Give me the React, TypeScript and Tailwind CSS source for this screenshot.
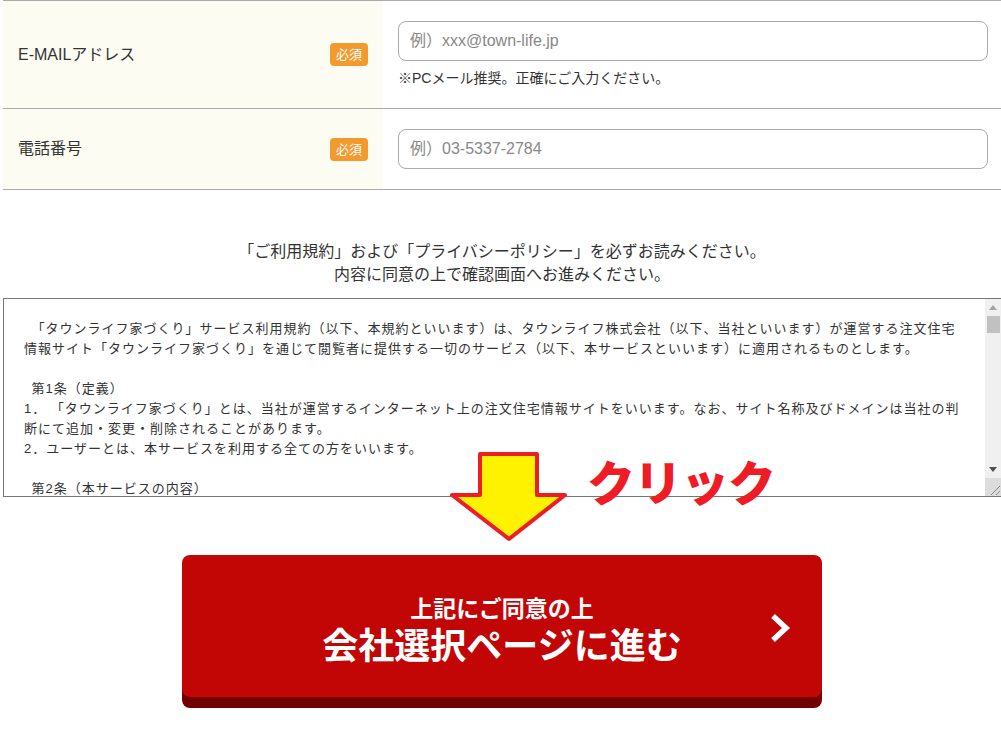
import React from 'react';

const termsLines = [
  '　「タウンライフ家づくり」サービス利用規約（以下、本規約といいます）は、タウンライフ株式会社（以下、当社といいます）が運営する注文住宅',
  '情報サイト「タウンライフ家づくり」を通じて閲覧者に提供する一切のサービス（以下、本サービスといいます）に適用されるものとします。',
  '',
  '\u2002第1条（定義）',
  '1． 「タウンライフ家づくり」とは、当社が運営するインターネット上の注文住宅情報サイトをいいます。なお、サイト名称及びドメインは当社の判',
  '断にて追加・変更・削除されることがあります。',
  '2．ユーザーとは、本サービスを利用する全ての方をいいます。',
  '',
  '\u2002第2条（本サービスの内容）',
];

function Badge() {
  return (
    <span className="inline-flex items-center justify-center w-[38px] h-[23px] rounded-[4px] bg-[#f39a2f] text-white text-[13px] leading-none">
      必須
    </span>
  );
}

function FormRow({
  label,
  placeholder,
  note,
}: {
  label: string;
  placeholder: string;
  note?: string;
}) {
  return (
    <div className="flex border-b border-[#aaaaaa]">
      <div className="w-[380px] shrink-0 bg-[#fcfcf2] pl-[15px] pr-[15px] flex items-center justify-between">
        <span className="text-[16px] text-[#333333]">{label}</span>
        <Badge />
      </div>
      <div className="flex-1 pl-[15px] pr-[13px] pt-[20px] pb-[20px]">
        <div className="h-[40px] rounded-[8px] border border-[#aaaaaa] px-[11px] flex items-center text-[16px] text-[#888888]">
          {placeholder}
        </div>
        {note && <p className="mt-[7px] text-[14px] leading-[20px] text-[#333333]">{note}</p>}
      </div>
    </div>
  );
}

export default function App() {
  return (
    <div
      className="w-[1001px] h-[731px] bg-white overflow-hidden"
      style={{ fontFamily: '"Liberation Sans", "Noto Sans CJK JP", sans-serif' }}
    >
      <div className="ml-[3px] relative">
        <div className="border-t border-[#aaaaaa]">
          <FormRow label="E-MAILアドレス" placeholder="例）xxx@town-life.jp" note="※PCメール推奨。正確にご入力ください。" />
          <FormRow label="電話番号" placeholder="例）03-5337-2784" />
        </div>

        <div className="mt-[50px] text-center text-[16px] leading-[23px] text-[#333333]">
          <p>「ご利用規約」および「プライバシーポリシー」を必ずお読みください。</p>
          <p>内容に同意の上で確認画面へお進みください。</p>
        </div>

        {/* terms box */}
        <div className="mt-[12px] h-[199px] flex border-l border-t border-b border-[#767676] bg-white">
          <div className="flex-1 overflow-hidden pt-[20px] pl-[20px] text-[13px] leading-[20px] tracking-[1px] text-[#333333] whitespace-pre">
            {termsLines.map((line, i) => (
              <div key={i} className="h-[20px]">
                {line}
              </div>
            ))}
          </div>
          <div className="w-[16px] shrink-0 bg-[#f0f0f0] flex flex-col items-center">
            <div className="h-[17px] flex items-center justify-center">
              <svg width="8" height="5" viewBox="0 0 8 5">
                <polygon points="4,0 8,5 0,5" fill="#a3a3a3" />
              </svg>
            </div>
            <div className="w-[13px] h-[17px] bg-[#c1c1c1]" />
            <div className="flex-1" />
            <div className="h-[17px] flex items-center justify-center">
              <svg width="8" height="5" viewBox="0 0 8 5">
                <polygon points="0,0 8,0 4,5" fill="#505050" />
              </svg>
            </div>
            <div className="h-[18px] w-full bg-[#dcdcdc] flex items-end justify-end">
              <svg width="12" height="12" viewBox="0 0 12 12">
                <line x1="2" y1="11" x2="11" y2="2" stroke="#888" strokeWidth="1" />
                <line x1="7" y1="11" x2="11" y2="7" stroke="#888" strokeWidth="1" />
              </svg>
            </div>
          </div>
        </div>

        {/* agree button */}
        <button className="mt-[58px] mx-auto flex w-[640px] h-[142px] rounded-[8px] bg-[#c20606] shadow-[0_11px_0_#720000] relative items-center justify-center pt-[9px] text-white font-bold">
          <span className="flex flex-col items-center">
            <span className="text-[23px] leading-[32px]">上記にご同意の上</span>
            <span className="text-[36px] leading-[43px]">会社選択ページに進む</span>
          </span>
          <svg className="absolute left-[586px] top-[57px]" width="24" height="32" viewBox="0 0 24 32">
            <polyline points="5,4 18,16 5,28" fill="none" stroke="white" strokeWidth="5.5" strokeLinejoin="miter" />
          </svg>
        </button>

        {/* click annotation */}
        <svg className="absolute left-[443px] top-[448px]" width="126" height="98" viewBox="443 448 126 98">
          <polygon
            points="477,454 534,454 534,495 562,495 506,539 449,495 477,495"
            fill="#fff200"
            stroke="#ee1c25"
            strokeWidth="4"
            strokeLinejoin="round"
          />
        </svg>
        <span className="absolute left-[584px] top-[450px] text-[48px] leading-[70px] font-black text-[#ee1c25] tracking-[-1px]">
          クリック
        </span>
      </div>
    </div>
  );
}
